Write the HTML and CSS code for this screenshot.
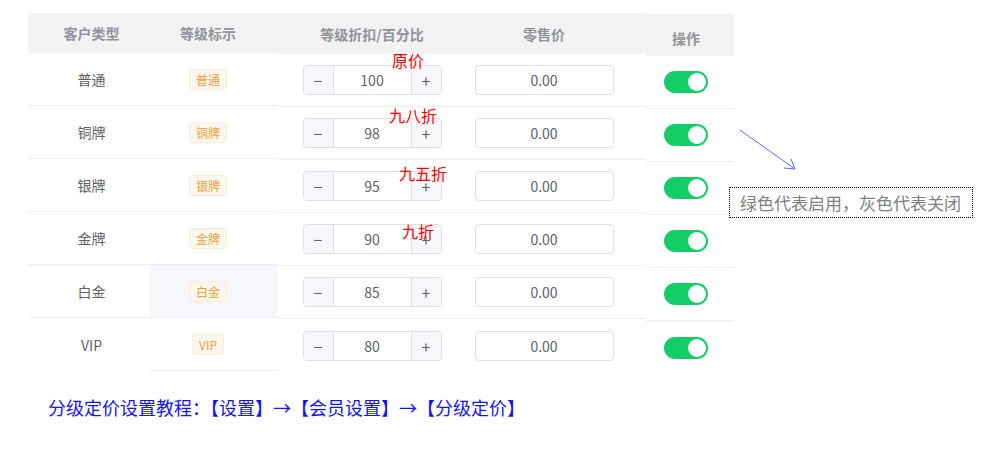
FILE: index.html
```html
<!DOCTYPE html>
<html lang="zh-CN">
  <head>
    <meta charset="UTF-8" />
    <meta name="viewport" content="width=device-width, initial-scale=1.0" />
    <title>分级定价</title>
    <link rel="stylesheet" href="styles.css">
  </head>
  <body>
    <div class="page">
      <div class="grid">
        <div class="col col-type">
          <div class="head">客户类型</div>
          <div class="cell">普通</div>
          <div class="cell">铜牌</div>
          <div class="cell">银牌</div>
          <div class="cell">金牌</div>
          <div class="cell">白金</div>
          <div class="cell last">VIP</div>
        </div>

        <div class="col col-tag">
          <div class="head">等级标示</div>
          <div class="cell"><span class="tag">普通</span></div>
          <div class="cell"><span class="tag">铜牌</span></div>
          <div class="cell"><span class="tag">银牌</span></div>
          <div class="cell"><span class="tag">金牌</span></div>
          <div class="cell hover"><span class="tag">白金</span></div>
          <div class="cell"><span class="tag">VIP</span></div>
        </div>

        <div class="col col-rate">
          <div class="head">等级折扣/百分比</div>
          <div class="cell"><div class="stepper"><span class="btn">−</span><span class="num">100</span><span class="btn">+</span></div></div>
          <div class="cell"><div class="stepper"><span class="btn">−</span><span class="num">98</span><span class="btn">+</span></div></div>
          <div class="cell"><div class="stepper"><span class="btn">−</span><span class="num">95</span><span class="btn">+</span></div></div>
          <div class="cell"><div class="stepper"><span class="btn">−</span><span class="num">90</span><span class="btn">+</span></div></div>
          <div class="cell"><div class="stepper"><span class="btn">−</span><span class="num">85</span><span class="btn">+</span></div></div>
          <div class="cell last"><div class="stepper"><span class="btn">−</span><span class="num">80</span><span class="btn">+</span></div></div>
        </div>

        <div class="col col-price">
          <div class="head">零售价</div>
          <div class="cell"><div class="input">0.00</div></div>
          <div class="cell"><div class="input">0.00</div></div>
          <div class="cell"><div class="input">0.00</div></div>
          <div class="cell"><div class="input">0.00</div></div>
          <div class="cell"><div class="input">0.00</div></div>
          <div class="cell last"><div class="input">0.00</div></div>
        </div>

        <div class="col col-op">
          <div class="head">操作</div>
          <div class="cell"><span class="switch"></span></div>
          <div class="cell"><span class="switch"></span></div>
          <div class="cell"><span class="switch"></span></div>
          <div class="cell"><span class="switch"></span></div>
          <div class="cell"><span class="switch"></span></div>
          <div class="cell last"><span class="switch"></span></div>
        </div>
      </div>

      <p class="guide">分级定价设置教程：【设置】→【会员设置】→【分级定价】</p>

      <!-- notes drawn over the screenshot -->
      <span class="note" style="left: 392px; top: 50px">原价</span>
      <span class="note" style="left: 389px; top: 105px">九八折</span>
      <span class="note" style="left: 399px; top: 163px">九五折</span>
      <span class="note" style="left: 402px; top: 221px">九折</span>

      <svg class="arrow" width="70" height="50" viewBox="0 0 70 50">
        <path d="M4 4 L59 43" stroke="#5b6cf2" stroke-width="1" fill="none" />
        <path d="M48 42 L59 43 L55 33" stroke="#5b6cf2" stroke-width="1" fill="none" />
      </svg>
      <div class="hint">绿色代表启用，灰色代表关闭</div>
    </div>
  </body>
</html>
```

FILE: styles.css
```css
* {
  padding: 0;
  margin: 0;
  box-sizing: border-box;
}
body {
  background: #fff;
  font-family: "Noto Sans CJK SC", "Noto Sans", sans-serif;
  font-size: 14px;
  color: #606266;
}
.page {
  position: relative;
  width: 993px;
  height: 454px;
  padding: 13px 0 0 28px;
}
.grid {
  display: flex;
  align-items: flex-start;
}
.col {
  display: flex;
  flex-direction: column;
}
.head {
  display: flex;
  align-items: center;
  justify-content: center;
  height: 40px;
  background: #f2f2f2;
  color: #909399;
  font-weight: bold;
}
.cell {
  display: flex;
  align-items: center;
  justify-content: center;
  height: 53px;
  border-bottom: 1px solid #ebeef5;
}
.cell.last {
  border-bottom: none;
}
.cell.hover {
  background: #f5f7fa;
}

/* column widths and small offsets */
.col-type {
  width: 122px;
}
.col-type .head,
.col-type .cell {
  padding-left: 5px;
}
.col-tag {
  width: 128px;
}
.col-tag .head,
.col-tag .cell {
  padding-right: 12px;
}
.col-rate {
  width: 178px;
}
.col-rate .head {
  height: 41px;
}
.col-rate .head,
.col-rate .cell {
  padding-left: 10px;
}
.col-price {
  width: 190px;
}
.col-price .head {
  height: 41px;
}
.col-price .head,
.col-price .cell {
  padding-right: 14px;
}
.col-op {
  width: 88px;
  margin-top: 1px;
}
.col-op .head {
  height: 42px;
  padding-top: 6px;
}
.col-op .head,
.col-op .cell {
  padding-right: 8px;
}

.tag {
  display: inline-block;
  height: 21px;
  line-height: 19px;
  padding: 0 6px;
  font-size: 12px;
  color: #e6a23c;
  background: #fdf6ec;
  border: 1px solid #faecd8;
  border-radius: 4px;
}

.stepper {
  display: flex;
  width: 139px;
  height: 30px;
  border: 1px solid #dcdfe6;
  border-radius: 4px;
  overflow: hidden;
}
.stepper .btn {
  width: 30px;
  display: flex;
  align-items: center;
  justify-content: center;
  background: #f5f7fa;
  color: #606266;
  font-size: 16px;
}
.stepper .btn:first-child {
  border-right: 1px solid #dcdfe6;
}
.stepper .btn:last-child {
  border-left: 1px solid #dcdfe6;
}
.stepper .num {
  flex: 1;
  display: flex;
  align-items: center;
  justify-content: center;
}

.input {
  width: 139px;
  height: 30px;
  line-height: 28px;
  text-align: center;
  border: 1px solid #dcdfe6;
  border-radius: 4px;
}

.switch {
  position: relative;
  display: inline-block;
  width: 44px;
  height: 22px;
  border-radius: 11px;
  background: #13ce66;
}
.switch::after {
  content: "";
  position: absolute;
  top: 2px;
  right: 2px;
  width: 18px;
  height: 18px;
  border-radius: 50%;
  background: #fff;
}

.guide {
  margin: 21px 0 0 20px;
  font-size: 18px;
  line-height: 24px;
  color: #1414f5;
}

.note {
  position: absolute;
  font-size: 16px;
  line-height: 20px;
  color: #ff0000;
}
.arrow {
  position: absolute;
  left: 736px;
  top: 126px;
}
.hint {
  position: absolute;
  left: 729px;
  top: 187px;
  width: 244px;
  height: 31px;
  padding-left: 10px;
  border: 1px dotted #000;
  font-size: 17px;
  line-height: 29px;
  color: #7f7f7f;
}
```
